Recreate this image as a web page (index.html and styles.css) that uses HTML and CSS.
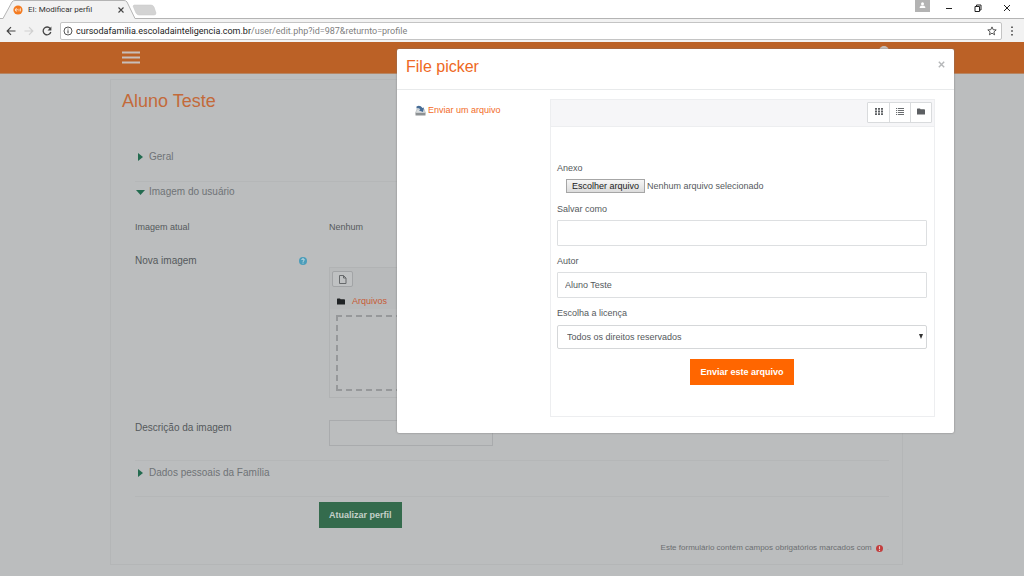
FILE: index.html
```html
<!DOCTYPE html>
<html lang="pt-BR">
<head>
<meta charset="utf-8">
<title>EI: Modificar perfil</title>
<link rel="stylesheet" href="styles.css">
</head>
<body>
<header class="browser">
  <div class="tabs">
    <svg class="tab-shape" width="160" height="19" viewBox="0 0 160 19" aria-hidden="true">
      <path d="M0 18.5H3L12 2Q13 .5 15 .5H124Q126 .5 127 2L135 18.5H160V19H0Z" fill="#f2f2f2"/>
      <path d="M0 18.5H3L12 2Q13 .5 15 .5H124Q126 .5 127 2L135 18.5H160" fill="none" stroke="#b4b4b4"/>
      <path d="M134 5H151Q153 5 154 7L156 13Q156 15 154 15H139Q137 15 136 13L133 6Z" fill="#d3d3d3" stroke="#c4c4c4" stroke-width=".5"/>
    </svg>
    <div class="tab">
      <svg width="10" height="10" viewBox="0 0 10 10" aria-hidden="true"><circle cx="5" cy="5" r="4.6" fill="#f47b20"/><path d="M2.3 5H4.3Q4.3 3.6 3.3 3.6 2.3 3.6 2.3 5 2.3 6.5 4.2 6.2M6 3.7V6.4M7.5 3.3V6.4" fill="none" stroke="#fff" stroke-width=".8" opacity=".8"/></svg>
      <span class="tab-title">EI: Modificar perfil</span>
      <button class="plain" aria-label="Fechar guia"><svg width="6" height="6" viewBox="0 0 6 6"><path d="M.5.5 5.5 5.5M5.5.5.5 5.5" stroke="#444" stroke-width="1.1"/></svg></button>
    </div>
    <div class="window-controls">
      <button class="plain user" aria-label="Usuário"><svg width="15" height="12" viewBox="0 0 15 12"><circle cx="7.5" cy="3.7" r="1.5" fill="#fff"/><path d="M4.7 8V7Q5.4 5.6 7.5 5.6T10.3 7V8Z" fill="#fff"/></svg></button>
      <button class="plain" aria-label="Minimizar"><svg width="10" height="10" viewBox="0 0 10 10"><path d="M2 5.5H8" stroke="#222"/></svg></button>
      <button class="plain" aria-label="Restaurar"><svg width="10" height="10" viewBox="0 0 10 10"><path d="M2 3.5H6.5V8.5H2ZM3.5 3.5V2H8V7H6.5" fill="none" stroke="#222"/></svg></button>
      <button class="plain" aria-label="Fechar"><svg width="10" height="10" viewBox="0 0 10 10"><path d="M2 2 8 8M8 2 2 8" stroke="#222"/></svg></button>
    </div>
  </div>
  <div class="toolbar">
    <button class="plain" aria-label="Voltar"><svg width="10" height="10" viewBox="0 0 10 10"><path d="M9.5 5H1.2M5 1.2 1.2 5 5 8.8" fill="none" stroke="#444" stroke-width="1.2"/></svg></button>
    <button class="plain" aria-label="Avançar"><svg width="10" height="10" viewBox="0 0 10 10"><path d="M.5 5H8.8M5 1.2 8.8 5 5 8.8" fill="none" stroke="#d0d0d0" stroke-width="1.2"/></svg></button>
    <button class="plain" aria-label="Recarregar"><svg width="10" height="10" viewBox="0 0 10 10"><path d="M8.2 2.6A3.9 3.9 0 1 0 8.8 6" fill="none" stroke="#444" stroke-width="1.3"/><path d="M9.4.5V4.4H5.5Z" fill="#444"/></svg></button>
    <div class="address">
      <svg width="10" height="10" viewBox="0 0 10 10" aria-hidden="true"><circle cx="5" cy="5" r="4" fill="none" stroke="#444" stroke-width=".9"/><path d="M5 4.3V7.3M5 2.6V3.5" stroke="#444"/></svg>
      <div class="url">cursodafamilia.escoladainteligencia.com.br<span class="path">/user/edit.php?id=987&amp;returnto=profile</span></div>
      <button class="plain" aria-label="Favorito"><svg width="10" height="10" viewBox="0 0 10 10"><path d="M5 .9 6.2 3.7 9.2 3.9 6.9 5.9 7.6 8.8 5 7.2 2.4 8.8 3.1 5.9.8 3.9 3.8 3.7Z" fill="none" stroke="#444" stroke-width=".9"/></svg></button>
    </div>
    <button class="plain menu" aria-label="Menu"><svg width="4" height="10" viewBox="0 0 4 10"><path d="M1.2.5h1.6v1.6H1.2ZM1.2 4.2h1.6v1.6H1.2ZM1.2 7.9h1.6v1.6H1.2Z" fill="#444"/></svg></button>
  </div>
</header>
<div class="page">
  <nav class="navbar">
    <button class="plain" aria-label="Abrir menu"><svg width="18" height="13" viewBox="0 0 18 13"><path d="M0 1.5H18M0 6.5H18M0 11.5H18" stroke="#c8bfba" stroke-width="2"/></svg></button>
    <span class="avatar"></span>
  </nav>
  <main class="card">
    <h1>Aluno Teste</h1>
    <form class="profile">
      <h2 class="section first"><svg width="6" height="8" viewBox="0 0 6 8"><path d="M1 0 6 4 1 8Z" fill="#246b50"/></svg>Geral</h2>
      <h2 class="section ruled"><svg class="open" width="9" height="5" viewBox="0 0 9 5"><path d="M0 0H9L4.5 5Z" fill="#246b50"/></svg>Imagem do usuário</h2>
      <div class="row current"><span>Imagem atual</span><span>Nenhum</span></div>
      <div class="row new">
        <div class="name">Nova imagem
          <button type="button" class="plain" aria-label="Ajuda"><svg width="8" height="8" viewBox="0 0 8 8"><circle cx="4" cy="4" r="4" fill="#4b9dba"/><path d="M2.8 3Q2.8 1.8 4 1.8T5.2 3Q5.2 3.6 4.5 4 4 4.2 4 4.8M4 5.6V6.5" fill="none" stroke="#d9e5e9"/></svg></button>
        </div>
        <div class="manager">
          <div class="manager-bar">
            <button type="button" class="add" aria-label="Adicionar"><svg width="9" height="9" viewBox="0 0 9 9"><path d="M1.5.5H5.5L8 3V8.5H1.5ZM5.5.5V3H8" fill="none" stroke="#66696b"/></svg></button>
            <div class="crumb"><svg width="8" height="7" viewBox="0 0 8 7"><path d="M0 1Q0 .4.6.4H3L3.6 1.3H7.2Q8 1.3 8 2V6.4H0Z" fill="#202325"/></svg><a href="#">Arquivos</a></div>
          </div>
          <div class="drop"></div>
        </div>
      </div>
      <div class="row description"><label for="desc">Descrição da imagem</label><input id="desc" type="text"></div>
      <h2 class="section ruled family"><svg width="6" height="8" viewBox="0 0 6 8"><path d="M1 0 6 4 1 8Z" fill="#246b50"/></svg>Dados pessoais da Família</h2>
      <div class="actions"><button type="submit" class="update">Atualizar perfil</button></div>
      <p class="required">Este formulário contém campos obrigatórios marcados com <svg width="7" height="7" viewBox="0 0 7 7"><circle cx="3.5" cy="3.5" r="3.5" fill="#c33d3d"/><path d="M3.5 1.2V4M3.5 4.8V6" stroke="#e2caca" stroke-width="1.1"/></svg> <span class="dot">.</span></p>
    </form>
  </main>
  <section class="modal" role="dialog" aria-labelledby="picker-title">
    <header class="modal-head">
      <h2 id="picker-title">File picker</h2>
      <button class="plain" aria-label="Fechar"><svg width="7" height="7" viewBox="0 0 7 7"><path d="M.8.8 6.2 6.2M6.2.8.8 6.2" stroke="#b5b7b9" stroke-width="1.4"/></svg></button>
    </header>
    <div class="modal-body">
      <aside class="repos">
        <a href="#"><svg width="11" height="11" viewBox="0 0 11 11"><path d="M2 4H9L10.5 8H.5Z" fill="#d9dddf" stroke="#a5a9ab" stroke-width=".5"/><path d="M.5 8H10.5V10.5H.5Z" fill="#8d9193"/><path d="M1.5 1.5Q5-.5 7.5 3L9 2.5 8 7 4 5.5 5.3 4.6Q4 2.5 1.5 3.5Z" fill="#466c96"/></svg>Enviar um arquivo</a>
      </aside>
      <div class="panel">
        <div class="views">
          <div class="view-group">
            <button aria-label="Ícones"><svg width="8" height="7" viewBox="0 0 8 7"><path d="M0 0h2v1.8H0ZM3 0h2v1.8H3ZM6 0h2v1.8H6ZM0 2.6h2v1.8H0ZM3 2.6h2v1.8H3ZM6 2.6h2v1.8H6ZM0 5.2h2V7H0ZM3 5.2h2V7H3ZM6 5.2h2V7H6Z" fill="#5c5f62"/></svg></button>
            <button aria-label="Lista"><svg width="8" height="7" viewBox="0 0 8 7"><path d="M0 .5H1.2M2 .5H8M0 2.5H1.2M2 2.5H8M0 4.5H1.2M2 4.5H8M0 6.5H1.2M2 6.5H8" stroke="#696c6f"/></svg></button>
            <button aria-label="Pastas"><svg width="8" height="7" viewBox="0 0 8 7"><path d="M0 1Q0 .4.6.4H3L3.6 1.3H7.2Q8 1.3 8 2V6.4H0Z" fill="#5c5f62"/></svg></button>
          </div>
        </div>
        <form class="upload">
          <label for="file">Anexo</label>
          <div class="file-line"><input id="file" class="hidden-file" type="file"><label for="file" class="choose">Escolher arquivo</label><span>Nenhum arquivo selecionado</span></div>
          <label for="saveas">Salvar como</label>
          <input id="saveas" class="field" type="text">
          <label for="author">Autor</label>
          <input id="author" class="field" type="text" value="Aluno Teste">
          <label for="license">Escolha a licença</label>
          <div class="select-wrap"><select id="license"><option>Todos os direitos reservados</option></select><svg width="4" height="5" viewBox="0 0 4 5"><path d="M0 0H4L2 5Z" fill="#333"/></svg></div>
          <button type="button" class="send">Enviar este arquivo</button>
        </form>
      </div>
    </div>
  </section>
</div>
</body>
</html>
```

FILE: styles.css
```css
* { box-sizing: border-box; }
body {
  margin: 0;
  min-height: 100vh;
  display: flex;
  flex-direction: column;
  font: 9px/12px "Liberation Sans", Arial, sans-serif;
  color: #55595c;
  background: #bbbdbe;
}
h1, h2, p { margin: 0; font-weight: 400; }
svg { display: block; flex: none; }
a { text-decoration: none; }
button, input, select { font: inherit; color: inherit; }
.plain { padding: 0; border: 0; background: none; }

/* Browser chrome */
.browser { font-family: Roboto, "Noto Sans", sans-serif; background: #f2f2f2; }
.tabs { position: relative; height: 19px; display: flex; justify-content: space-between; background: linear-gradient(#fff 18px, #b4b4b4 18px); }
.tab-shape { position: absolute; left: 0; top: 0; }
.tab { position: relative; width: 124px; padding-left: 13px; display: flex; align-items: center; gap: 5px; font-size: 8px; color: #333; }
.tab-title { flex: 1; white-space: nowrap; }
.window-controls { display: flex; align-items: flex-start; gap: 19px; padding-right: 12px; }
.window-controls .plain { padding-top: 3px; }
.window-controls .user { padding: 0; background: #b3b3b3; margin-right: -5px; }
.toolbar { height: 23px; display: flex; align-items: center; gap: 8px; padding: 0 10px 0 6px; }
.address { flex: 1; height: 18px; display: flex; align-items: center; gap: 3px; padding: 0 4px 0 2px; border: 1px solid #c4c4c4; border-radius: 2px; background: #fff; }
.url { flex: 1; font-size: 9px; color: #222; white-space: nowrap; }
.path { color: #808080; }

/* Profile page */
.page { position: relative; flex: 1; }
.navbar { position: relative; height: 32px; display: flex; align-items: center; padding-left: 122px; background: #bb6126; border-bottom: 1px solid #b68562; }
.avatar { position: absolute; right: 135px; top: 4px; width: 10px; height: 10px; border-radius: 50%; background: #c8bfba; }
.card { margin: 5px 121px 0 110px; padding: 10px 13px 10px 11px; border: 1px solid #b4b6b7; }
h1 { font-size: 18px; line-height: 22px; color: #c36a3a; }
.profile { padding-left: 13px; }
.section { display: flex; align-items: center; gap: 6px; padding-left: 2px; font-size: 10px; line-height: 16px; color: #6f7376; }
.section .open { margin: 0 -2px 0 -1px; }
.first { margin-top: 37px; }
.ruled { border-top: 1px solid #b5b7b8; padding-top: 2px; margin-top: 16px; }
.row { display: grid; grid-template-columns: 194px 1fr; }
.current { margin-top: 21px; }
.new { margin-top: 22px; }
.name { height: 12px; display: flex; justify-content: space-between; padding-right: 22px; font-size: 10px; }
.name .plain { display: flex; align-items: center; }
.manager { margin-top: 12px; border: 1px solid #b1b3b4; }
.manager-bar { padding: 3px 3px 2px 2px; background: #b8babb; }
.add { display: flex; align-items: center; justify-content: center; width: 21px; height: 16px; padding: 0; border: 1px solid #a2a4a6; border-radius: 2px; background: #bfc1c2; }
.crumb { display: flex; align-items: center; gap: 7px; padding: 8px 0 0 5px; }
.crumb a { color: #c75a36; }
.drop { height: 76px; margin: 6px; border: 2px dashed #96989a; }
.description { margin-top: 22px; font-size: 10px; }
.description label { padding-top: 2px; }
.description input { width: 164px; height: 26px; border: 1px solid #a9abad; background: transparent; }
.family { margin-top: 14px; padding-top: 4px; }
.actions { margin-top: 15px; padding: 5px 0 0 184px; border-top: 1px solid #b5b7b8; }
.update { height: 26px; padding: 0 10px; border: 0; background: #346b4d; color: #c4d0c9; font-weight: 700; }
.required { display: flex; justify-content: flex-end; gap: 4px; align-items: center; margin-top: 14px; font-size: 8px; color: #6c6f71; }
.dot { color: #a0a2a3; }

/* File picker */
.modal { position: absolute; left: 397px; right: 70px; top: 7px; border-radius: 2px; background: #fff; box-shadow: 0 0 2px #777; }
.modal-head { height: 41px; display: flex; justify-content: space-between; align-items: flex-start; padding: 8px 9px 0; border-bottom: 1px solid #e8eaeb; }
.modal-head h2 { font-size: 16px; line-height: 20px; color: #ee6823; }
.modal-head .plain { padding-top: 4px; }
.modal-body { display: flex; padding: 9px 19px 16px 18px; }
.repos { width: 135px; padding-top: 5px; }
.repos a { display: flex; align-items: center; gap: 2px; color: #f26b29; }
.panel { flex: 1; border: 1px solid #edeef0; }
.views { display: flex; justify-content: flex-end; padding: 2px 2px 3px; background: #f6f6f8; border-bottom: 1px solid #edeef0; }
.view-group { display: flex; border: 1px solid #d9dbdd; background: #fff; border-radius: 1px; }
.view-group button { width: 21px; height: 19px; display: flex; align-items: center; justify-content: center; padding: 0 0 2px; border: 0; background: none; }
.view-group button + button { border-left: 1px solid #d9dbdd; }
.upload { display: flex; flex-direction: column; padding: 35px 7px 31px 6px; }
.file-line { position: relative; display: flex; align-items: center; gap: 2px; margin: 5px 0 10px 9px; }
.hidden-file { position: absolute; width: 1px; height: 1px; opacity: 0; }
.choose { padding: 0 5px; border: 1px solid #a6a6a6; background: linear-gradient(#f6f6f6, #dcdcdc); color: #222; }
.field { width: 100%; height: 26px; margin: 5px 0 9px; padding: 0 7px; border: 1px solid #dddfe1; border-radius: 1px; background: #fff; }
.select-wrap { position: relative; margin: 6px 0 10px; }
select { display: block; width: 100%; height: 24px; padding: 0 9px; appearance: none; border: 1px solid #d5d7d9; border-radius: 2px; background: #fff; }
.select-wrap svg { position: absolute; right: 4px; top: 9px; pointer-events: none; }
.send { align-self: center; height: 26px; padding: 0 10px; border: 0; background: #ff6600; color: #fff; font-weight: 700; }
```
